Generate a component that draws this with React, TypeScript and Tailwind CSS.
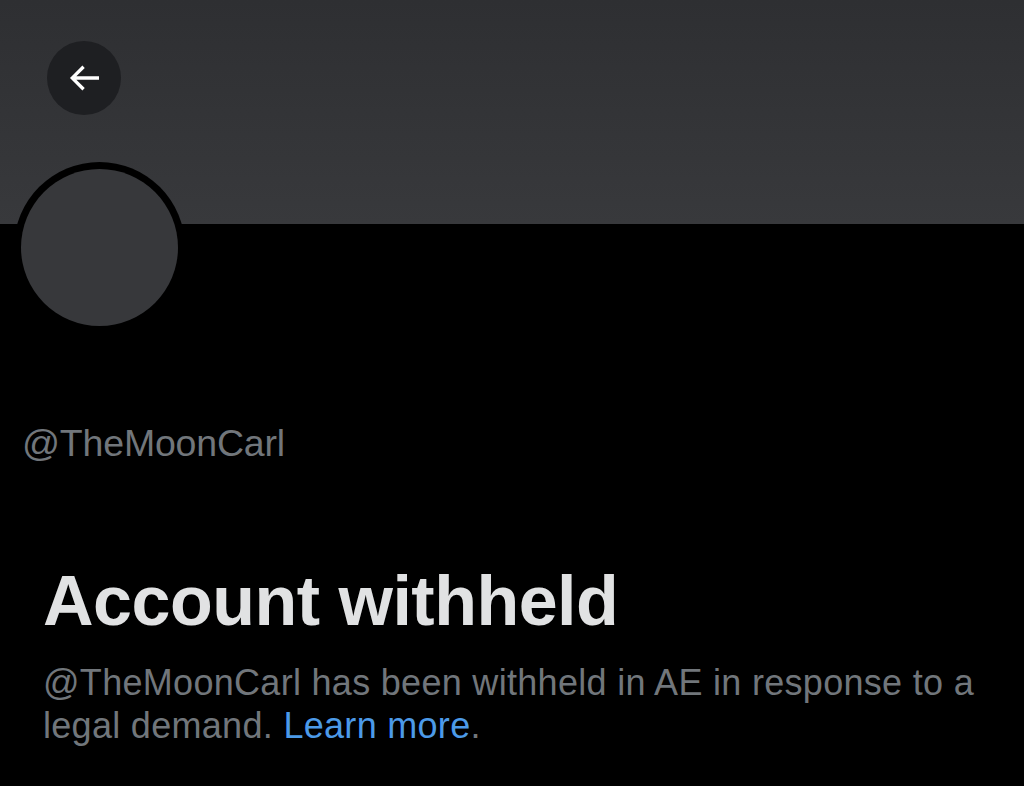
import React from "react";

function BackArrow() {
  return (
    <svg viewBox="0 0 24 24" className="w-[40px] h-[40px]" fill="#ffffff">
      <path d="M7.414 13l5.043 5.04-1.414 1.42L3.586 12l7.457-7.46 1.414 1.42L7.414 11H21v2H7.414z" />
    </svg>
  );
}

export default function App() {
  return (
    <div
      className="w-[1024px] h-[786px] bg-black overflow-hidden flex flex-col"
      style={{ fontFamily: '"Liberation Sans", Arial, sans-serif' }}
    >
      {/* Banner */}
      <div className="h-[224px] shrink-0 bg-gradient-to-b from-[#2e2f32] to-[#38393c] pt-[41px] pl-[47px]">
        <button className="w-[74px] h-[74px] rounded-full bg-[#1e1f22] flex items-center justify-center">
          <BackArrow />
        </button>
      </div>

      {/* Avatar */}
      <div className="-mt-[62px] ml-[14px] w-[171px] h-[171px] rounded-full bg-black p-[7px] shrink-0">
        <div className="w-full h-full rounded-full bg-[#37383b]" />
      </div>

      {/* Handle */}
      <div className="mt-[88px] ml-[22px] text-[37.5px] leading-[44px] text-[#71767b] tracking-[-0.2px]">
        @TheMoonCarl
      </div>

      {/* Withheld notice */}
      <div className="mt-[98px] pl-[43px] pr-[20px]">
        <h1 className="text-[70px] leading-[76px] font-bold text-[#e1e2e3] tracking-[-0.5px]">
          Account withheld
        </h1>
        <p className="mt-[22px] text-[36px] leading-[43px] text-[#71767b] tracking-[0.3px]">
          @TheMoonCarl has been withheld in AE in response to a legal demand.{" "}
          <a className="text-[#4c9ae8]">Learn more</a>.
        </p>
      </div>
    </div>
  );
}
